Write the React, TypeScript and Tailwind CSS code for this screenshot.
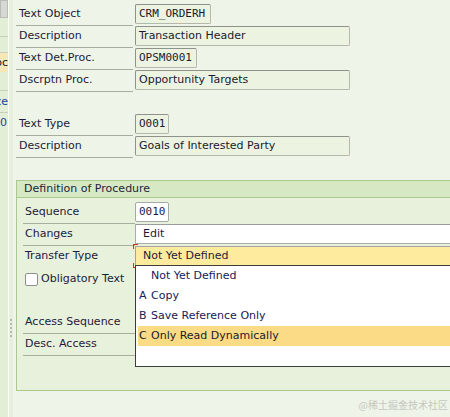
import React from 'react'

const sans = "font-['DejaVu_Sans',sans-serif]"
const mono = "font-['DejaVu_Sans_Mono',monospace]"

type FieldProps = { w: string; children?: React.ReactNode; code?: boolean }

// read-only display field (green tint)
function Display({ w, children, code }: FieldProps) {
  return (
    <div
      className={`h-[20px] ${w} overflow-hidden whitespace-nowrap rounded-[2px] border border-[#b4b8ad] border-l-[#8e928a] border-t-[#8e928a] bg-[#ecf3e1] pl-[3px] leading-[18px] text-[#1a1a2e] ${code ? `${mono} text-[11px]` : ''}`}
    >
      {children}
    </div>
  )
}

function Row({ label, children, line = true }: { label?: string; children?: React.ReactNode; line?: boolean }) {
  return (
    <div className="flex h-[22px] items-start">
      <div className={`h-[22px] w-[117px] pl-[3px] leading-[20px] ${line ? 'border-b border-[#a7ad9f]' : ''}`}>{label}</div>
      <div className="ml-[2px]">{children}</div>
    </div>
  )
}

function BoxRow({ label, children, line = true }: { label?: React.ReactNode; children?: React.ReactNode; line?: boolean }) {
  return (
    <div className="flex h-[22px] items-start">
      <div className={`ml-[6px] flex h-[22px] w-[112px] items-start pl-[2px] leading-[20px] ${line ? 'border-b border-[#a7ad9f]' : ''}`}>
        {label}
      </div>
      <div>{children}</div>
    </div>
  )
}

function LeftStrip() {
  return (
    <div className="flex w-[8px] flex-col overflow-hidden bg-[#e2eed5] text-[11px]">
      <div className="h-[18px] border border-[#b9bcb5] bg-[#d6d8d3]" />
      <div className="h-[19px] border-b border-[#c5cfbb]" />
      <div className="h-[16px] border-b border-[#c5cfbb]" />
      <div className="flex h-[19px] justify-end whitespace-nowrap bg-[#f6e6b8] leading-[19px] text-[#202030]">Text Det.Proc</div>
      <div className="h-[19px] border-b border-[#c5cfbb]" />
      <div className="flex h-[22px] justify-end whitespace-nowrap border-b border-[#c5cfbb] leading-[21px] text-[#1f3fa6]">Sequence</div>
      <div className="flex h-[16px] justify-end whitespace-nowrap pr-[1px] leading-[20px] text-[#1f3fa6]">0</div>
    </div>
  )
}

export default function App() {
  const options = [
    { key: '', text: 'Not Yet Defined' },
    { key: 'A', text: 'Copy' },
    { key: 'B', text: 'Save Reference Only' },
    { key: 'C', text: 'Only Read Dynamically', active: true },
  ]

  return (
    <div className={`flex h-[417px] w-[450px] overflow-hidden bg-[#eff4e9] text-[11px] text-[#1b1b3a] ${sans}`}>
      <LeftStrip />
      <div className="w-px bg-[#fbfdf8]" />
      <div className="flex w-[4px] flex-col items-start gap-[2px] bg-[#e7efdd] pl-[1px] pt-[319px]">
        {[0, 1, 2, 3, 4].map((i) => (
          <div key={i} className="h-[2px] w-[2px] bg-[#b3bbab]" />
        ))}
      </div>

      <main className="min-w-0 flex-1 overflow-hidden pl-[3px] pt-[4px]">
        <Row label="Text Object">
          <Display w="w-[76px]" code>CRM_ORDERH</Display>
        </Row>
        <Row label="Description">
          <Display w="w-[215px]">Transaction Header</Display>
        </Row>
        <Row label="Text Det.Proc.">
          <Display w="w-[62px]" code>OPSM0001</Display>
        </Row>
        <Row label="Dscrptn Proc.">
          <Display w="w-[215px]">Opportunity Targets</Display>
        </Row>
        <div className="h-[22px]" />
        <Row label="Text Type">
          <Display w="w-[34px]" code>O001</Display>
        </Row>
        <Row label="Description">
          <Display w="w-[215px]">Goals of Interested Party</Display>
        </Row>

        {/* Definition of Procedure group */}
        <section className="mt-[22px] w-[460px] border border-r-0 border-[#a9c98f] bg-[#e8f1dc]">
          <div className="h-[17px] border-b border-[#a9c98f] bg-[#d7e9c4] pl-[7px] leading-[16px] text-[#1e1e3a]">
            Definition of Procedure
          </div>
          <div className="pb-[34px] pt-[4px]">
            <BoxRow label="Sequence">
              <div className={`h-[20px] w-[34px] rounded-[2px] border border-[#a8a8a8] bg-white pl-[3px] leading-[18px] text-[#1a1a50] ${mono}`}>
                0010
              </div>
            </BoxRow>
            <BoxRow label="Changes">
              <div className="h-[20px] w-[330px] border border-r-0 border-[#acacac] border-t-[#9a9a9a] bg-white pl-[7px] leading-[18px] text-[#1a1a3a]">
                Edit
              </div>
            </BoxRow>
            <BoxRow label="Transfer Type" line={false}>
              <div className="relative">
                <div className="h-[20px] w-[330px] border border-r-0 border-[#a3a3a3] bg-[#ffeb9e] pl-[7px] leading-[18px] text-[#1a1a3a]">
                  Not Yet Defined
                </div>
                <span className="absolute left-[-2px] top-[-2px] h-[5px] w-[5px] border-l border-t border-[#d8301c]" />
                <span className="absolute bottom-[-2px] left-[-2px] h-[5px] w-[5px] border-b border-l border-[#d8301c]" />

                {/* open dropdown list */}
                <div className="absolute left-0 top-[19px] z-10 w-[330px] border border-r-0 border-[#3c3c3c] bg-white pb-[20px] text-[#16205a]">
                  {options.map((o) => (
                    <div
                      key={o.text}
                      className={`ml-[2px] flex h-[20px] items-center whitespace-nowrap pl-[1px] ${o.active ? 'bg-[#fbdb85] text-[#1a1a2a]' : ''}`}
                    >
                      <span className="w-[12px]">{o.key}</span>
                      <span>{o.text}</span>
                    </div>
                  ))}
                </div>
              </div>
            </BoxRow>
            <BoxRow
              line={false}
              label={
                <span className="flex h-[20px] items-center gap-[3px]">
                  <span className="mt-[2px] inline-block h-[13px] w-[13px] rounded-[2px] border border-[#8f8f8f] bg-white" />
                  <span className="mt-[2px]">Obligatory Text</span>
                </span>
              }
            />
            <div className="h-[22px]" />
            <BoxRow label="Access Sequence" />
            <BoxRow label="Desc. Access" />
          </div>
        </section>

        <div className="flex justify-end pr-[2px] pt-[8px] font-['Noto_Sans_CJK_SC',sans-serif] text-[10px] leading-[12px] text-[#c4c8c0]">
          @稀土掘金技术社区
        </div>
      </main>
    </div>
  )
}
